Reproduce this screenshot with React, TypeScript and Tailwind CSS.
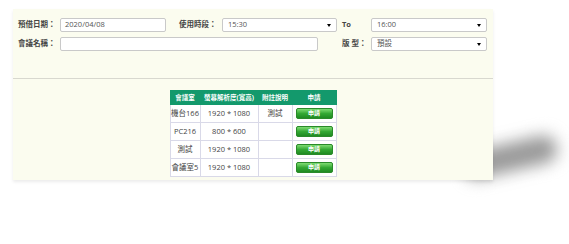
import React from "react";

const font = { fontFamily: '"Open Sans", "Noto Sans CJK TC", sans-serif' };

function Select({ value }: { value: string }) {
    return (
        <div className="flex h-[14px] items-center justify-between rounded-[2px] border border-[#c9c9c9] bg-white pl-[5px] pr-[5px] text-[7.5px] text-[#555]">
            <span>{value}</span>
            <span className="h-0 w-0 border-x-[2px] border-t-[3px] border-x-transparent border-t-black" />
        </div>
    );
}

function Input({ value }: { value?: string }) {
    return (
        <div className="flex h-[14px] items-center rounded-[2px] border border-[#c9c9c9] bg-white pl-[4px] text-[7.5px] text-[#555]">
            {value}
        </div>
    );
}

function Label({ children, className = "" }: { children: React.ReactNode; className?: string }) {
    return (
        <div className={"flex items-center whitespace-nowrap text-[7.5px] font-bold text-[#444] " + className}>
            {children}
        </div>
    );
}

const rooms = [
    { name: "機台166", res: "1920 * 1080", note: "測試" },
    { name: "PC216", res: "800 * 600", note: "" },
    { name: "測試", res: "1920 * 1080", note: "" },
    { name: "會議室5", res: "1920 * 1080", note: "" },
];

export default function App() {
    return (
        <div className="h-[244px] w-[569px] bg-white pl-[13px] pt-[9px]" style={font}>
            <div className="relative w-[480px]">
                {/* curled corner shadow */}
                <div className="absolute left-[450px] top-[134px] h-[28px] w-[95px] -rotate-[13deg] rounded-full bg-[#9a9a9a] blur-[8px]" />

                <div className="relative h-[171px] bg-[#fbfcef] shadow-[0_2px_3px_rgba(0,0,0,0.08)]">
                    <div className="flex h-[69px] flex-col gap-[5px] pl-[5px] pt-[9px]">
                        <div className="grid grid-cols-[42px_106px_56px_115px_34px_116px]">
                            <Label>預借日期：</Label>
                            <Input value="2020/04/08" />
                            <Label className="pl-[13px]">使用時段：</Label>
                            <Select value="15:30" />
                            <Label className="pl-[5px]">To</Label>
                            <Select value="16:00" />
                        </div>
                        <div className="grid grid-cols-[42px_106px_56px_115px_34px_116px]">
                            <Label>會議名稱：</Label>
                            <div className="col-span-3 mr-[19px]">
                                <Input />
                            </div>
                            <Label className="pl-[5px]">版 型：</Label>
                            <Select value="預設" />
                        </div>
                    </div>

                    <div className="h-px bg-[#d8d8cf]" />

                    <div className="flex justify-center pt-[11px]">
                        <table className="border-collapse text-center text-[7.5px] text-[#444]">
                            <thead>
                                <tr className="h-[14px] bg-[#13996c] text-[6.5px] font-bold text-white">
                                    <th className="w-[30px] border border-[#13996c] font-bold">會議室</th>
                                    <th className="w-[58px] border border-[#13996c] font-bold">螢幕解析度(寬高)</th>
                                    <th className="w-[34px] border border-[#13996c] font-bold">附註說明</th>
                                    <th className="w-[44px] border border-[#13996c] font-bold">申請</th>
                                </tr>
                            </thead>
                            <tbody>
                                {rooms.map((r) => (
                                    <tr key={r.name} className="h-[18px] bg-white">
                                        <td className="border border-[#d9d9e8]">{r.name}</td>
                                        <td className="border border-[#d9d9e8]">{r.res}</td>
                                        <td className="border border-[#d9d9e8]">{r.note}</td>
                                        <td className="border border-[#d9d9e8] px-[3px]">
                                            <div className="flex h-[11px] items-center justify-center rounded-[2px] border border-[#2a8a2a] bg-gradient-to-b from-[#7ddc72] via-[#34a934] to-[#1f8a22] text-[6px] font-bold text-white">
                                                申請
                                            </div>
                                        </td>
                                    </tr>
                                ))}
                            </tbody>
                        </table>
                    </div>
                </div>
            </div>
        </div>
    );
}
